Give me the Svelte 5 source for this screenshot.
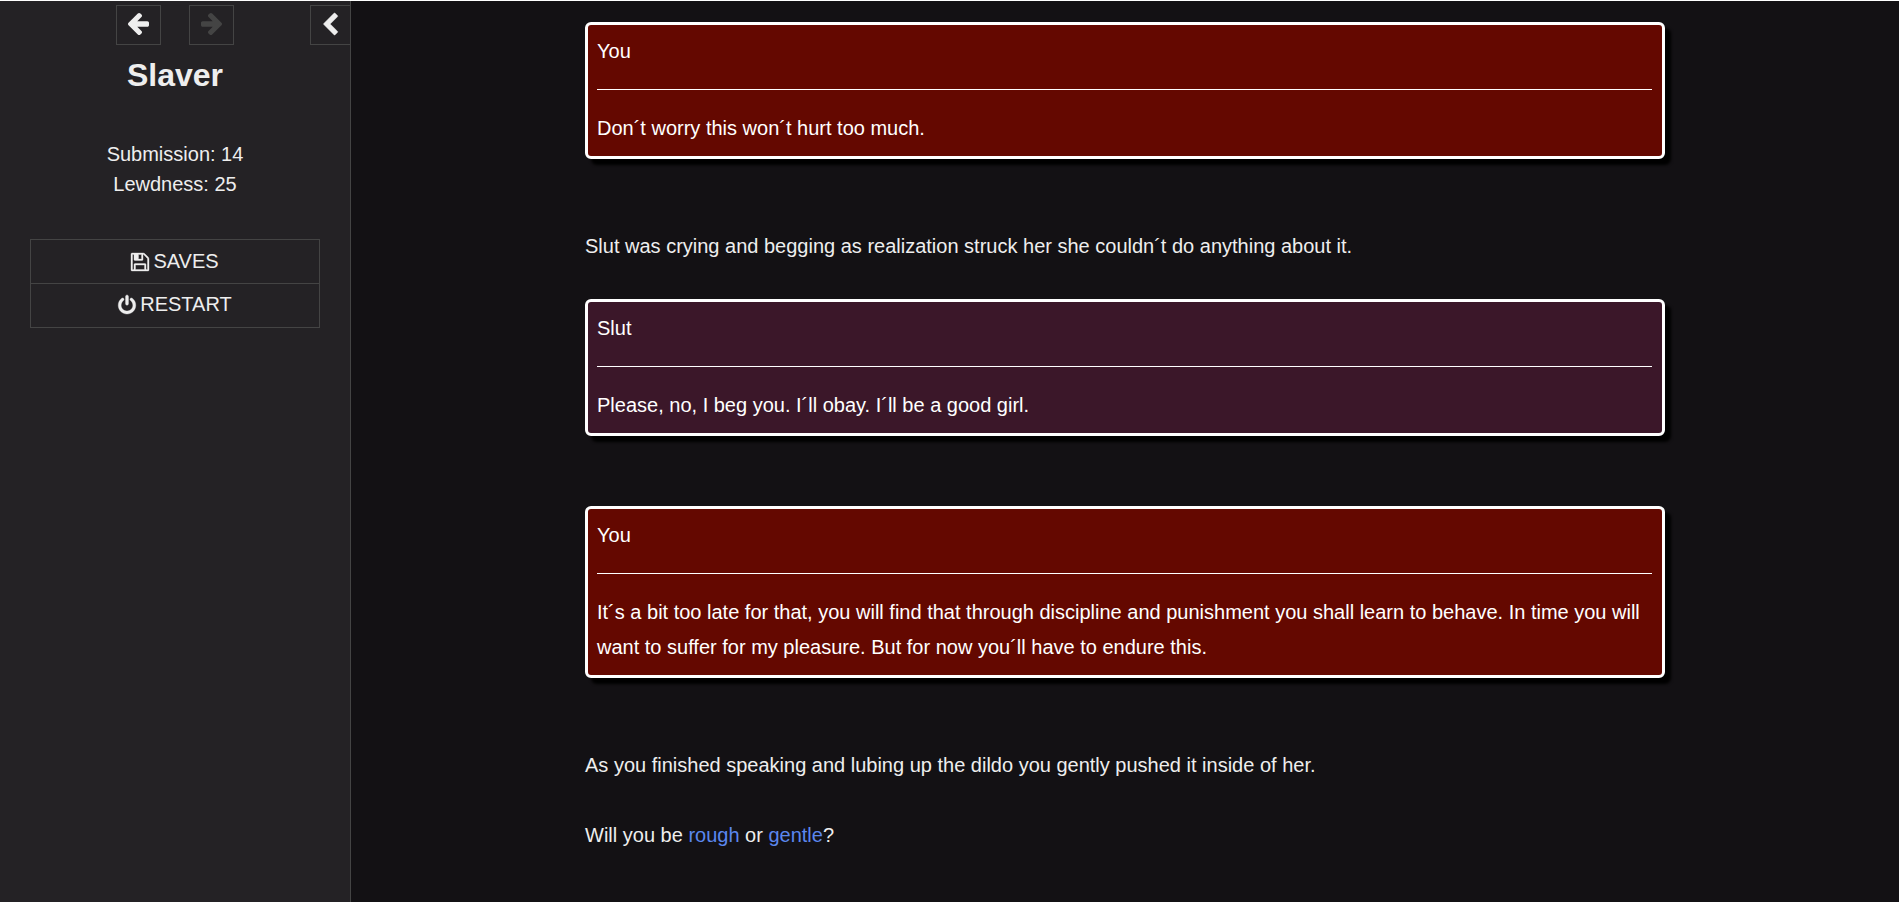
<script lang="ts">
  type Passage = {
    kind: 'speech' | 'text';
    speaker?: string;
    tone?: 'you' | 'other';
    text: string;
  };

  let stowed = $state(false);

  const stats = [
    { name: 'Submission', value: 14 },
    { name: 'Lewdness', value: 25 },
  ];

  const passages: Passage[] = [
    { kind: 'speech', speaker: 'You', tone: 'you', text: 'Don´t worry this won´t hurt too much.' },
    { kind: 'text', text: 'Slut was crying and begging as realization struck her she couldn´t do anything about it.' },
    { kind: 'speech', speaker: 'Slut', tone: 'other', text: 'Please, no, I beg you. I´ll obay. I´ll be a good girl.' },
    {
      kind: 'speech',
      speaker: 'You',
      tone: 'you',
      text: 'It´s a bit too late for that, you will find that through discipline and punishment you shall learn to behave. In time you will want to suffer for my pleasure. But for now you´ll have to endure this.',
    },
    { kind: 'text', text: 'As you finished speaking and lubing up the dildo you gently pushed it inside of her.' },
  ];
</script>

<div class="page">
  <aside class="sidebar" class:stowed>
    <nav class="history">
      <button class="nav back" type="button" aria-label="Go back">
        <svg viewBox="64 128 1472 1536" width="21" height="22" aria-hidden="true">
          <path d="M1536 832v128q0 53-32.5 90.5t-84.5 37.5h-704l293 294q38 36 38 90t-38 90l-75 76q-37 37-90 37-52 0-91-37l-651-652q-37-37-37-90 0-52 37-91l651-650q38-38 91-38 52 0 90 38l75 74q38 38 38 91t-38 91l-293 293h704q52 0 84.5 37.5t32.5 90.5z" />
        </svg>
      </button>
      <button class="nav forward" type="button" aria-label="Go forward" disabled>
        <svg viewBox="64 128 1472 1536" width="21" height="22" aria-hidden="true">
          <path
            transform="translate(1600 0) scale(-1 1)"
            d="M1536 832v128q0 53-32.5 90.5t-84.5 37.5h-704l293 294q38 36 38 90t-38 90l-75 76q-37 37-90 37-52 0-91-37l-651-652q-37-37-37-90 0-52 37-91l651-650q38-38 91-38 52 0 90 38l75 74q38 38 38 91t-38 91l-293 293h704q52 0 84.5 37.5t32.5 90.5z"
          />
        </svg>
      </button>
      <button class="nav toggle" type="button" aria-label="Toggle the sidebar" onclick={() => (stowed = !stowed)}>
        <svg class="bold" viewBox="390 26 1056 1612" width="15" height="22" aria-hidden="true">
          <path d="M1427 301l-531 531 531 531q19 19 19 45t-19 45l-166 166q-19 19-45 19t-45-19l-742-742q-19-19-19-45t19-45l742-742q19-19 45-19t45 19l166 166q19 19 19 45t-19 45z" />
        </svg>
      </button>
    </nav>

    <h1>Slaver</h1>

    <div class="stats">
      {#each stats as stat}
        <div>{stat.name}: {stat.value}</div>
      {/each}
    </div>

    <div class="menu">
      <button type="button">
        <svg class="bold" viewBox="128 128 1536 1536" width="18" height="18" aria-hidden="true">
          <path d="M512 1536h768v-384h-768v384zm896 0h128v-896q0-14-10-38.5t-20-34.5l-281-281q-10-10-34-20t-39-10v416q0 40-28 68t-68 28h-576q-40 0-68-28t-28-68v-416h-128v1280h128v-416q0-40 28-68t68-28h832q40 0 68 28t28 68v416zm-384-928v-320q0-13-9.5-22.5t-22.5-9.5h-192q-13 0-22.5 9.5t-9.5 22.5v320q0 13 9.5 22.5t22.5 9.5h192q13 0 22.5-9.5t9.5-22.5zm640 32v928q0 40-28 68t-68 28h-1344q-40 0-68-28t-28-68v-1344q0-40 28-68t68-28h928q40 0 88 20t76 48l280 280q28 28 48 76t20 88z" />
        </svg>
        SAVES
      </button>
      <button type="button">
        <svg class="bold" viewBox="128 0 1536 1664" width="18" height="19" aria-hidden="true">
          <path d="M1664 896q0 156-61 298t-164 245-245 164-298 61-298-61-245-164-164-245-61-298q0-182 80.5-343t226.5-270q43-32 95.5-25t83.5 50q32 42 24.5 94.5t-49.5 84.5q-98 74-151.5 181t-53.5 228q0 104 40.5 198.5t109.5 163.5 163.5 109.5 198.5 40.5 198.5-40.5 163.5-109.5 109.5-163.5 40.5-198.5q0-121-53.5-228t-151.5-181q-42-32-49.5-84.5t24.5-94.5q31-43 84-50t95 25q146 109 226.5 270t80.5 343zm-640-768v640q0 52-38 90t-90 38-90-38-38-90v-640q0-52 38-90t90-38 90 38 38 90z" />
        </svg>
        RESTART
      </button>
    </div>
  </aside>

  <main class="story">
    <div class="passage">
      {#each passages as passage}
        {#if passage.kind === 'speech'}
          <section class="speech {passage.tone}">
            <div>{passage.speaker}</div>
            <hr />
            <p>{passage.text}</p>
          </section>
        {:else}
          <p class="line">{passage.text}</p>
        {/if}
      {/each}
      <p class="line">Will you be <a href="#rough">rough</a> or <a href="#gentle">gentle</a>?</p>
    </div>
  </main>
</div>

<style>
  :global(body) {
    margin: 0;
    background: #ffffff;
  }

  .page {
    box-sizing: border-box;
    display: flex;
    min-height: 100vh;
    border-top: 1px solid #ffffff;
    border-right: 1px solid #ffffff;
    background: #131114;
    background-clip: padding-box;
    color: #eeeeee;
    font-family: "Liberation Sans", Arial, sans-serif;
    font-size: 20px;
    line-height: 35px;
  }

  button {
    display: flex;
    align-items: center;
    justify-content: center;
    box-sizing: border-box;
    margin: 0;
    padding: 0;
    border: 1px solid #444444;
    background: transparent;
    color: inherit;
    font: inherit;
    cursor: pointer;
  }

  button:disabled {
    color: #444444;
    cursor: default;
  }

  svg {
    display: block;
    overflow: visible;
    fill: currentColor;
  }

  .bold {
    stroke: currentColor;
    stroke-width: 30;
  }

  .sidebar {
    flex: none;
    width: 350px;
    border-right: 1px solid #444444;
    background: #242225;
    text-align: center;
  }

  .sidebar.stowed {
    margin-left: -310px;
  }

  .history {
    display: grid;
    grid-template-columns: 1fr 45px 45px 1fr;
    column-gap: 28px;
    padding-top: 4px;
  }

  .nav {
    height: 40px;
    padding-bottom: 2px;
  }

  .back {
    grid-column: 2;
  }

  .toggle {
    justify-self: end;
    width: 40px;
    border-right: none;
  }

  h1 {
    margin: 10px 0 0;
    font-size: 32px;
    line-height: 40px;
  }

  .stats {
    margin-top: 44px;
    line-height: 30px;
  }

  .menu {
    margin: 40px 30px 0;
    border: 1px solid #444444;
  }

  .menu button {
    gap: 4px;
    width: 100%;
    height: 43px;
    border: none;
  }

  .menu button + button {
    height: 44px;
    padding-bottom: 2px;
    border-top: 1px solid #444444;
  }

  .story {
    flex: 1;
    min-width: 0;
    padding: 21px 40px 35px;
  }

  .passage {
    max-width: 1080px;
    margin: 0 auto;
  }

  p {
    margin: 0;
  }

  .line {
    margin-bottom: 35px;
  }

  .speech {
    margin-bottom: 70px;
    padding: 9px 10px 10px 9px;
    border: 3px solid #ffffff;
    border-radius: 6px;
    box-shadow: 6px 6px 3px #000000;
    color: #ffffff;
  }

  .speech.you {
    background: #640800;
  }

  .speech.other {
    background: #3b1729;
  }

  hr {
    height: 1px;
    margin: 20px 0 21px;
    border: none;
    background: #ffffff;
  }

  a {
    color: #5b87ee;
    text-decoration: none;
  }

  a:hover {
    color: #88aaff;
    text-decoration: underline;
  }
</style>
